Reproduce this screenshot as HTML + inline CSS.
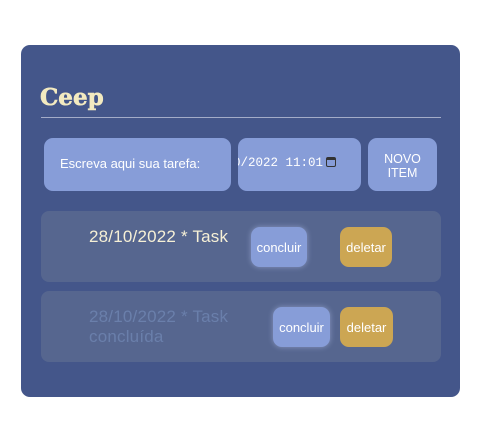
<!DOCTYPE html>
<html><head><meta charset="utf-8"><style>
*{margin:0;padding:0;box-sizing:border-box}
body{width:480px;height:447px;background:#fff;font-family:"Liberation Sans",sans-serif;position:relative;overflow:hidden}
.c{position:absolute;left:21px;top:45px;width:439px;height:352px;background:#44568a;border-radius:9px}
.t{position:absolute;left:40px;top:84px;font-family:"DejaVu Serif","Liberation Serif",serif;font-weight:bold;font-size:23px;color:#f3eac0;letter-spacing:0px;-webkit-text-stroke:0.6px #f3eac0}
.hr{position:absolute;left:41px;top:117px;width:400px;height:1px;background:#a4acc8}
.b{position:absolute;background:#879dd8;border-radius:9px;color:#fff}
.task{position:absolute;left:41px;width:400px;height:71px;background:#56668f;border-radius:8px}
.btn{position:absolute;border-radius:9px;color:#fff;font-size:13px;display:flex;align-items:center;justify-content:center}
.cb{background:#879dd8;box-shadow:0 0 6px rgba(200,210,255,.45)}
.db{background:#cca653}
</style></head><body>
<div class="c"></div>
<div class="t">Ceep</div>
<div class="hr"></div>
<div class="b" style="left:44px;top:138px;width:187px;height:53px;font-size:13px;padding:18px 0 0 16px">Escreva aqui sua tarefa:</div>
<div class="b" style="left:238px;top:138px;width:123px;height:53px;font-family:'Liberation Mono',monospace;font-size:12.5px;padding:18px 0 0 0;overflow:hidden;white-space:nowrap"><span style="margin-left:-5px">0/2022 11:01</span><span style="display:inline-block;width:10px;height:10px;border:1.5px solid #333;border-radius:2px;margin-left:3px;vertical-align:-1px;border-top-width:3px"></span></div>
<div class="b" style="left:368px;top:138px;width:69px;height:53px;font-size:12.5px;text-align:center;padding-top:14px;line-height:14px">NOVO<br>ITEM</div>
<div class="task" style="top:211px"></div>
<div style="position:absolute;left:89px;top:227px;font-size:17px;color:#f6f0d6;letter-spacing:0.2px">28/10/2022 * Task</div>
<div class="btn cb" style="left:251px;top:227px;width:56px;height:40px">concluir</div>
<div class="btn db" style="left:340px;top:227px;width:52px;height:40px">deletar</div>
<div class="task" style="top:291px"></div>
<div style="position:absolute;left:89px;top:307px;font-size:17px;color:#6a7fab;line-height:20px;letter-spacing:0.2px">28/10/2022 * Task<br>concluída</div>
<div class="btn cb" style="left:273px;top:307px;width:57px;height:40px">concluir</div>
<div class="btn db" style="left:340px;top:307px;width:53px;height:40px">deletar</div>
</body></html>
